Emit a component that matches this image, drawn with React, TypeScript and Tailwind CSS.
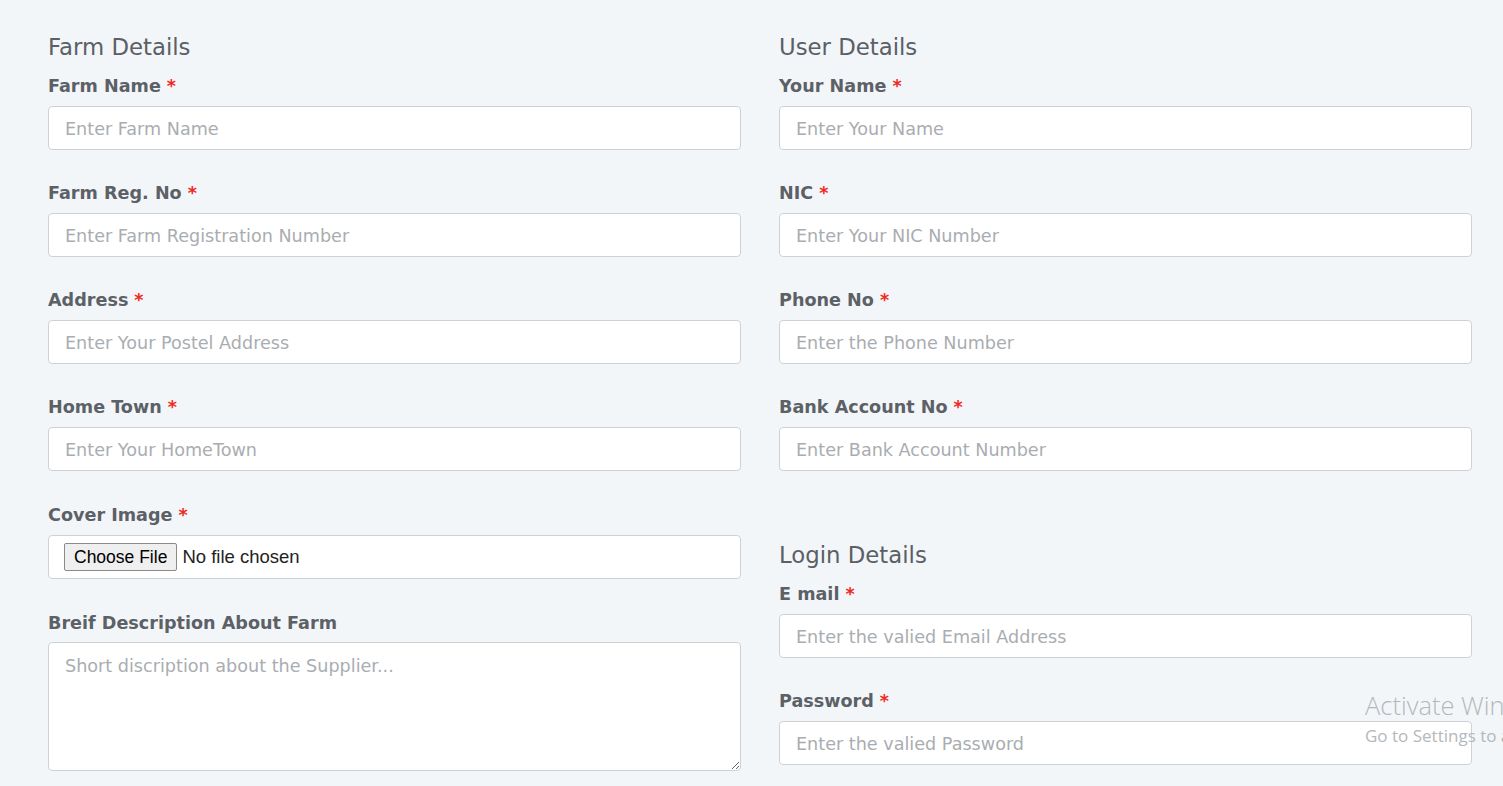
const Field = ({
  label,
  placeholder,
  required = true,
}: {
  label: string;
  placeholder: string;
  required?: boolean;
}) => (
  <div className="mb-[31px]">
    <label className="block text-[17.6px] leading-[24px] font-bold text-[#5b6166] mb-[8px]">
      {label}
      {required && <span className="text-[#f0281e] ml-[6px]">*</span>}
    </label>
    <input
      type="text"
      placeholder={placeholder}
      className="block w-full h-[44px] pl-[16px] pr-[15px] pt-[2px] bg-white border border-[#cfd2d5] rounded-[4px] text-[17.6px] text-[#495057] placeholder:text-[#a9adb1] outline-none"
    />
  </div>
);

const Heading = ({ children }: { children: string }) => (
  <h3 className="text-[22.8px] leading-[26px] text-[#5a6065] mb-[14px]">{children}</h3>
);

export default function App() {
  return (
    <div
      className="relative w-full h-[786px] overflow-hidden bg-[#f3f6f9]"
      style={{ fontFamily: "'DejaVu Sans', Verdana, sans-serif" }}
    >
      <div className="grid grid-cols-2 gap-x-[38px] pl-[48px] pr-[31px] pt-[34px]">
        <div>
          <Heading>Farm Details</Heading>
          <Field label="Farm Name" placeholder="Enter Farm Name" />
          <Field label="Farm Reg. No" placeholder="Enter Farm Registration Number" />
          <Field label="Address" placeholder="Enter Your Postel Address" />
          <Field label="Home Town" placeholder="Enter Your HomeTown" />
          <div className="mb-[32px]">
            <label className="block text-[17.6px] leading-[24px] font-bold text-[#5b6166] mb-[8px] pt-[1px]">
              Cover Image<span className="text-[#f0281e] ml-[6px]">*</span>
            </label>
            <div className="flex items-center h-[44px] px-[15px] bg-white border border-[#cfd2d5] rounded-[4px]">
              <span className="h-[28px] px-[9px] flex items-center bg-[#efefef] border border-[#8a8a8a] rounded-[2px] text-[17.5px] text-black font-['Liberation_Sans',Arial,sans-serif]">
                Choose File
              </span>
              <span className="ml-[5px] text-[18.5px] text-[#222] font-['Liberation_Sans',Arial,sans-serif]">
                No file chosen
              </span>
            </div>
          </div>
          <label className="block text-[17.6px] leading-[24px] font-bold text-[#5b6166] mb-[7px]">
            Breif Description About Farm
          </label>
          <textarea
            placeholder="Short discription about the Supplier..."
            className="block w-full h-[129px] pl-[16px] pr-[15px] py-[10px] bg-white border border-[#cfd2d5] rounded-[4px] text-[17.6px] text-[#495057] placeholder:text-[#a9adb1] outline-none"
          />
        </div>
        <div>
          <Heading>User Details</Heading>
          <Field label="Your Name" placeholder="Enter Your Name" />
          <Field label="NIC" placeholder="Enter Your NIC Number" />
          <Field label="Phone No" placeholder="Enter the Phone Number" />
          <Field label="Bank Account No" placeholder="Enter Bank Account Number" />
          <div className="pt-[40px]">
            <Heading>Login Details</Heading>
            <Field label="E mail" placeholder="Enter the valied Email Address" />
            <Field label="Password" placeholder="Enter the valied Password" />
          </div>
        </div>
      </div>

      {/* windows activation watermark */}
      <div className="absolute left-[1365px] top-[689px] w-[138px] overflow-hidden whitespace-nowrap pointer-events-none text-[#b5b8bb] font-['Open_Sans',sans-serif]">
        <div className="text-[25.5px] leading-[32px] font-light">Activate Windows</div>
        <div className="text-[17px] leading-[24px] mt-[3px]">Go to Settings to activate Windows.</div>
      </div>
    </div>
  );
}
